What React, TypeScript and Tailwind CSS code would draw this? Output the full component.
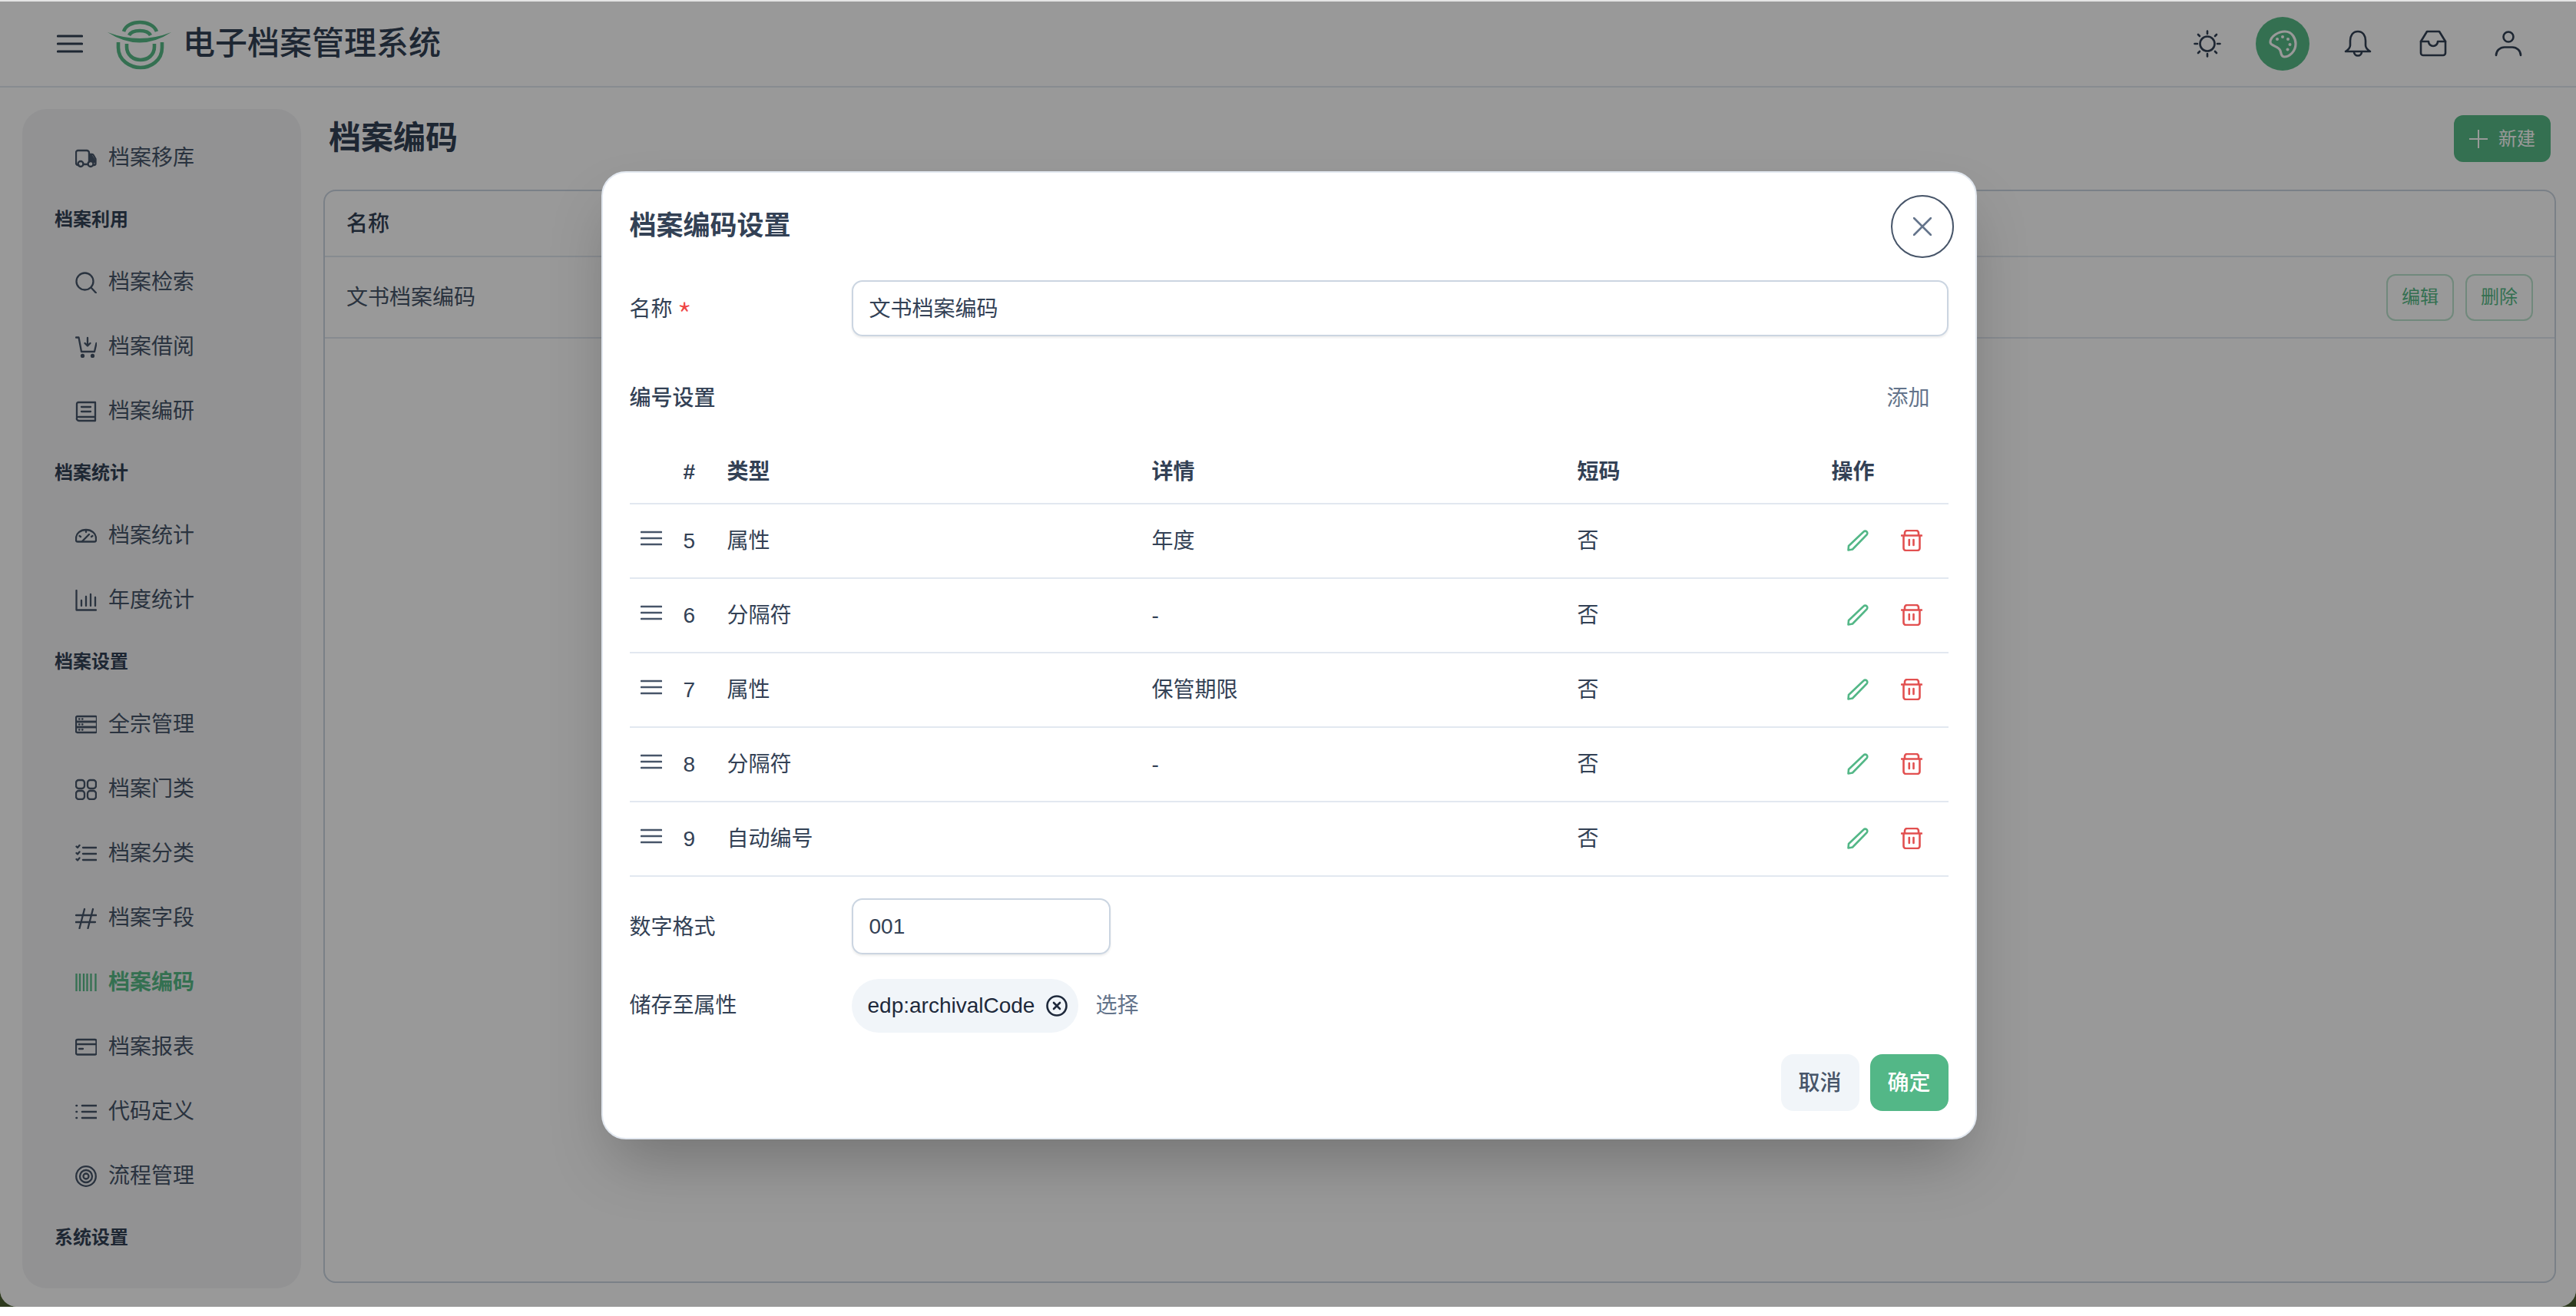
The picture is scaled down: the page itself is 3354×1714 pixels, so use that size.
import React from "react";

const Ic = ({ children, className = "w-[28px] h-[28px]", vb = "0 0 28 28", sw = 2.3 }: { children: React.ReactNode; className?: string; vb?: string; sw?: number }) => (
  <svg viewBox={vb} className={className + " shrink-0"} fill="none" stroke="currentColor" strokeWidth={sw} strokeLinecap="round" strokeLinejoin="round">
    {children}
  </svg>
);

const icons: Record<string, React.ReactNode> = {
  truck: (
    <>
      <path d="M4.5 23 H3.5 a2.5 2.5 0 0 1 -2.5 -2.5 V6.5 A2.5 2.5 0 0 1 3.5 4 H15 a3 3 0 0 1 3 3 V19" />
      <circle cx="7" cy="21.5" r="3.5" />
      <circle cx="20" cy="21.5" r="3.5" />
      <path d="M18 9 h4 a2 2 0 0 1 1.7 1 l2.8 5 v6 a2 2 0 0 1 -2 2 h-1" />
      <path d="M19 10 h3 l4 6 v4 h-2.5 a4 4 0 0 0 -4.5 -2 z" fill="currentColor" stroke="none" />
      <path d="M10.5 22 H16.5" />
    </>
  ),
  search: (
    <>
      <circle cx="12.5" cy="12.5" r="11" />
      <path d="M20.5 20.5 L27 27.5" />
    </>
  ),
  cart: (
    <>
      <path d="M1 1.5 H4.5 L8 20 H25 L27.5 9" />
      <path d="M16 2 V12 M12.5 9 L16 12.5 L19.5 9" />
      <circle cx="9.5" cy="25.5" r="1.5" fill="currentColor" />
      <circle cx="22.5" cy="25.5" r="1.5" fill="currentColor" />
    </>
  ),
  book: (
    <>
      <path d="M2 22 V4 a2 2 0 0 1 2 -2 H26 V26 H5 a3 3 0 0 1 -3 -4 a3 3 0 0 1 3 -1 H26" />
      <path d="M8 8 H20 M8 14 H20" />
    </>
  ),
  gauge: (
    <>
      <path d="M3 21.5 H25 a2 2 0 0 0 2 -2 V17 A13 11 0 0 0 1 17 v2.5 a2 2 0 0 0 2 2 z" />
      <path d="M9 21 L18 12 M5.5 14 L7 15 M14 7 V9 M22.5 14 L21 15" />
    </>
  ),
  bars: (
    <>
      <path d="M1.5 1 V26.5 H27" />
      <path d="M8 14 V21 M14 9 V21 M20 6 V21 M26 10 V21" />
    </>
  ),
  server: (
    <>
      <rect x="1" y="3" width="27" height="7" rx="1.5" />
      <rect x="1" y="10" width="27" height="7" rx="0" />
      <rect x="1" y="17" width="27" height="7" rx="1.5" />
      <path d="M5 6.5 H5.5 M9 6.5 H9.5 M5 13.5 H5.5 M9 13.5 H9.5 M5 20.5 H5.5 M9 20.5 H9.5" />
    </>
  ),
  grid: (
    <>
      <rect x="1" y="2" width="11" height="11" rx="3.5" />
      <rect x="16" y="2" width="11" height="11" rx="3.5" />
      <rect x="1" y="16" width="11" height="11" rx="3.5" />
      <rect x="16" y="16" width="11" height="11" rx="3.5" />
    </>
  ),
  checks: (
    <>
      <path d="M10 6 H27.5 M10 14 H27.5 M10 22 H27.5" />
      <path d="M1.5 4.5 L3 6 L5.5 3 M1.5 13 L3 14.5 L5.5 11.5 M1.5 21 L3 22.5 L5.5 19.5" />
    </>
  ),
  hash: <path d="M1 10 H27.5 M0.5 19 H26 M12 2 L5.5 27 M23 2 L16.5 27" />,
  barcode: <path d="M1.5 2 V25 M6 2 V25 M11 2 V25 M15.5 2 V25 M20.5 2 V25 M26.5 2 V25" strokeLinecap="butt" />,
  card: (
    <>
      <rect x="1" y="4" width="26.5" height="19.5" rx="2" />
      <path d="M1 10 H27.5 M5 16 H10" />
    </>
  ),
  list: <path d="M9 6 H27.5 M9 14 H27.5 M9 22 H27.5 M1.5 6 H2 M1.5 14 H2 M1.5 22 H2" strokeWidth="2.6" />,
  target: (
    <>
      <circle cx="14" cy="14" r="12.8" />
      <circle cx="14" cy="14" r="8" />
      <circle cx="14" cy="14" r="3.5" />
    </>
  ),
};

type Nav = { t: string; icon?: string; active?: boolean };
const nav: Nav[] = [
  { t: "档案移库", icon: "truck" },
  { t: "档案利用" },
  { t: "档案检索", icon: "search" },
  { t: "档案借阅", icon: "cart" },
  { t: "档案编研", icon: "book" },
  { t: "档案统计" },
  { t: "档案统计", icon: "gauge" },
  { t: "年度统计", icon: "bars" },
  { t: "档案设置" },
  { t: "全宗管理", icon: "server" },
  { t: "档案门类", icon: "grid" },
  { t: "档案分类", icon: "checks" },
  { t: "档案字段", icon: "hash" },
  { t: "档案编码", icon: "barcode", active: true },
  { t: "档案报表", icon: "card" },
  { t: "代码定义", icon: "list" },
  { t: "流程管理", icon: "target" },
  { t: "系统设置" },
];

const rows = [
  { n: "5", type: "属性", detail: "年度" },
  { n: "6", type: "分隔符", detail: "-" },
  { n: "7", type: "属性", detail: "保管期限" },
  { n: "8", type: "分隔符", detail: "-" },
  { n: "9", type: "自动编号", detail: "" },
];

const Logo = () => (
  <svg viewBox="0 0 100 80" className="w-[100px] h-[80px] shrink-0 -mx-[10px]" fill="none" stroke="#58bb88" strokeWidth="4.6">
    <path d="M31 24 C36 8 68 8 74 24" />
    <path d="M38 29 C42 21 62 21 66 29" />
    <path d="M10 25 Q52 41 93 25 Q52 52 10 25 Z" fill="#58bb88" stroke="none" />
    <path d="M24 38 V45 C24 62 40 71 53 71 C66 71 81 62 81 45 V38" />
    <path d="M35 40 V44 C35 55 44 61 53 61 C62 61 71 55 71 44 V40" />
  </svg>
);

export default function App() {
  return (
    <div className="w-[3354px] h-[1714px] bg-white overflow-hidden font-['Liberation_Sans','Noto_Sans_CJK_SC',sans-serif] text-[28px]">
      <div className="h-[2px] bg-[#e4e4e4]" />
      <div className="h-[1700px] bg-[#2e3a1e]">
        <div className="relative h-[1700px] rounded-b-[22px] overflow-hidden bg-white">
          {/* header */}
          <header className="h-[112px] border-b-2 border-[#e2e8f0] flex items-center pl-[74px] pr-[53px] pt-[2px]">
            <svg viewBox="0 0 34 24" className="w-[34px] h-[24px] text-[#334155] -mt-[2px]" fill="none" stroke="currentColor" strokeWidth="3.2" strokeLinecap="round">
              <path d="M1.5 2 H32.5 M1.5 12 H32.5 M1.5 22 H32.5" />
            </svg>
            <div className="ml-[32px] -mt-[2px]"><Logo /></div>
            <div className="ml-[18px] text-[42px] leading-none font-medium text-[#334155] -mt-[2px]">电子档案管理系统</div>
            <div className="ml-auto flex items-center gap-[28px] text-[#334155] -mt-[2px]">
              <div className="w-[70px] h-[70px] flex items-center justify-center">
                <Ic className="w-[36px] h-[36px]" vb="0 0 36 36" sw={2.6}>
                  <circle cx="18" cy="18" r="9.5" />
                  <path d="M18 1.5 V5 M18 31 V34.5 M1.5 18 H5 M31 18 H34.5 M6 6 L8 8 M30 6 L28 8 M6 30 L8 28 M30 30 L28 28" />
                </Ic>
              </div>
              <div className="w-[70px] h-[70px] rounded-full bg-[#58bb88] flex items-center justify-center">
                <svg viewBox="6 7 70 70" className="w-[70px] h-[70px]" fill="none" stroke="white" strokeWidth="3.2" strokeLinejoin="round">
                  <path d="M25 40 C25 32 36 26 44 26 C54 26 58 36 58 42 C58 52 50 59 43 59 C39 59 39 54 38 51 C36 45 25 45 25 40 Z" />
                  <g fill="white" stroke="none">
                    <circle cx="34" cy="36" r="2" />
                    <circle cx="41" cy="33" r="2" />
                    <circle cx="48" cy="36" r="2" />
                    <circle cx="50.5" cy="43" r="2" />
                    <circle cx="47.5" cy="49.5" r="2" />
                  </g>
                </svg>
              </div>
              <div className="w-[70px] h-[70px] flex items-center justify-center">
                <Ic className="w-[36px] h-[36px]" vb="0 0 36 36" sw={2.6}>
                  <path d="M18 2 C11 2 8 8 8 14 V20 C8 23 5 26 2 28 H34 C31 26 28 23 28 20 V14 C28 8 25 2 18 2 Z" />
                  <path d="M13 28.5 a5 5 0 0 0 10 0" />
                </Ic>
              </div>
              <div className="w-[70px] h-[70px] flex items-center justify-center">
                <Ic className="w-[36px] h-[36px]" vb="0 0 36 36" sw={2.6}>
                  <path d="M10 2 H26 L34 15 V30 a3 3 0 0 1 -3 3 H5 a3 3 0 0 1 -3 -3 V15 Z" />
                  <path d="M2 15 H12 a6 6 0 0 0 12 0 H34" />
                </Ic>
              </div>
              <div className="w-[70px] h-[70px] flex items-center justify-center">
                <Ic className="w-[36px] h-[36px]" vb="0 0 36 36" sw={2.6}>
                  <circle cx="18" cy="9" r="6.5" />
                  <path d="M2 33 C2 27 7 22.5 13 22.5 H23 C29 22.5 34 27 34 33" />
                </Ic>
              </div>
            </div>
          </header>

          {/* body */}
          <div className="flex">
            <aside className="ml-[29px] mt-[28px] w-[363px] h-[1536px] rounded-[32px] bg-[#f3f4f6] pt-[21px] shrink-0 overflow-hidden">
              {nav.map((n, i) =>
                n.icon ? (
                  <div key={i} className={"h-[84px] pl-[69px] pt-[2px] flex items-center gap-[15px] " + (n.active ? "text-[#58bb88] font-semibold" : "text-[#475569]")}>
                    <Ic className="w-[28px] h-[28px]">{icons[n.icon]}</Ic>
                    <span>{n.t}</span>
                  </div>
                ) : (
                  <div key={i} className="h-[78px] pl-[42px] flex items-center text-[24px] font-semibold text-[#334155]">
                    {n.t}
                  </div>
                )
              )}
            </aside>

            <main className="flex-1 ml-[29px] mr-[26px] min-w-0">
              <div className="mt-[36px] h-[61px] flex items-center justify-between pl-[7px] pr-[7px]">
                <h1 className="text-[42px] font-semibold leading-none text-[#334155] -mt-[2px]">档案编码</h1>
                <button className="w-[126px] h-[61px] rounded-[12px] bg-[#58bb88] text-white text-[24px] flex items-center justify-center gap-[14px]">
                  <svg viewBox="0 0 24 24" className="w-[24px] h-[24px]" fill="none" stroke="currentColor" strokeWidth="2">
                    <path d="M12 0 V24 M0 12 H24" />
                  </svg>
                  新建
                </button>
              </div>
              <div className="mt-[36px] h-[1424px] border-2 border-[#cbd5e1] rounded-[16px]">
                <div className="h-[86px] border-b-2 border-[#e2e8f0] pl-[28px] pt-[2px] flex items-center font-medium text-[#334155]">名称</div>
                <div className="h-[106px] border-b-2 border-[#e2e8f0] pl-[28px] pr-[28px] flex items-center justify-between text-[#475569]">
                  <span className="pt-[2px]">文书档案编码</span>
                  <div className="flex gap-[15px]">
                    <button className="w-[88px] h-[61px] rounded-[12px] border-2 border-[#58bb88]/40 text-[#58bb88] text-[24px]">编辑</button>
                    <button className="w-[88px] h-[61px] rounded-[12px] border-2 border-[#58bb88]/40 text-[#58bb88] text-[24px]">删除</button>
                  </div>
                </div>
              </div>
            </main>
          </div>

          {/* overlay + modal */}
          <div className="absolute inset-0 bg-black/40 flex justify-center items-start pt-[221px]">
            <div className="relative ml-[2px] w-[1791px] bg-white border-2 border-[#e2e8f0] rounded-[32px] p-[35px] shadow-[0_40px_80px_-16px_rgba(0,0,0,0.25)] text-[#334155]">
              <div className="h-[68px] flex items-center text-[35px] font-semibold">档案编码设置</div>
              <button className="absolute top-[29px] right-[28px] w-[82px] h-[82px] rounded-full border-2 border-[#475569] flex items-center justify-center text-[#64748b]">
                <svg viewBox="0 0 24 24" className="w-[24px] h-[24px]" fill="none" stroke="currentColor" strokeWidth="2.6" strokeLinecap="round">
                  <path d="M1 1 L23 23 M23 1 L1 23" />
                </svg>
              </button>

              <div className="mt-[37px] flex items-center">
                <div className="w-[289px] shrink-0 pt-[2px] flex items-center">
                  名称
                  <span className="ml-[6px] h-[28px] font-['Noto_Sans_CJK_JP',sans-serif] font-light text-[44px] leading-[44px] text-[#ef4444] translate-y-[-2px]">*</span>
                </div>
                <div className="flex-1 h-[73px] rounded-[14px] border-2 border-[#cbd5e1] shadow-[0_2px_3px_rgba(0,0,0,0.08)] flex items-center pl-[21px] pt-[2px]">文书档案编码</div>
              </div>

              <div className="mt-[53px] h-[56px] flex items-center justify-between">
                <span className="font-medium">编号设置</span>
                <span className="text-[#64748b] mr-[24px]">添加</span>
              </div>

              <div className="mt-[26px]">
                <div className="h-[84px] border-b-2 border-[#e2e8f0] pt-[2px] grid grid-cols-[70px_57px_553px_554px_331px_1fr] items-center font-semibold">
                  <span />
                  <span>#</span>
                  <span>类型</span>
                  <span>详情</span>
                  <span>短码</span>
                  <span>操作</span>
                </div>
                {rows.map((r) => (
                  <div key={r.n} className="h-[97px] border-b-2 border-[#e2e8f0] grid grid-cols-[70px_57px_553px_554px_331px_1fr] items-center">
                    <svg viewBox="0 0 28 20" className="ml-[14px] w-[28px] h-[20px] -mt-[8px]" fill="none" stroke="#475569" strokeWidth="2.6" strokeLinecap="round">
                      <path d="M1 2 H27 M1 10 H27 M1 18 H27" />
                    </svg>
                    <span>{r.n}</span>
                    <span>{r.type}</span>
                    <span>{r.detail}</span>
                    <span>否</span>
                    <div className="flex items-center gap-[42px] pl-[20px] -mt-[2px]">
                      <svg viewBox="0 0 28 28" className="w-[28px] h-[28px] text-[#53b787]" fill="none" stroke="currentColor" strokeWidth="2.6" strokeLinejoin="round">
                        <path d="M1.5 26.5 L2 21 L21.5 2.5 a2.8 2.8 0 0 1 4 4 L7 25.5 Z" />
                      </svg>
                      <svg viewBox="0 0 28 28" className="w-[28px] h-[28px] text-[#e25050]" fill="none" stroke="currentColor" strokeWidth="2.6" strokeLinecap="round" strokeLinejoin="round">
                        <path d="M5 7 V4 a3 3 0 0 1 3 -3 H20 a3 3 0 0 1 3 3 V7" />
                        <path d="M1 7.5 H27" />
                        <path d="M3.5 8 V24 a3 3 0 0 0 3 3 H21.5 a3 3 0 0 0 3 -3 V8" />
                        <path d="M10.8 13 V20 M16.5 13 V20" />
                      </svg>
                    </div>
                  </div>
                ))}
              </div>

              <div className="mt-[28px] flex items-center">
                <div className="w-[289px] shrink-0 pt-[2px]">数字格式</div>
                <div className="w-[337px] h-[73px] rounded-[14px] border-2 border-[#cbd5e1] shadow-[0_2px_3px_rgba(0,0,0,0.08)] flex items-center pl-[21px]">001</div>
              </div>

              <div className="mt-[32px] flex items-center">
                <div className="w-[289px] shrink-0">储存至属性</div>
                <div className="w-[295px] h-[70px] rounded-full bg-[#f1f5f9] flex items-center pl-[21px] text-[#1e293b]">
                  <span>edp:archivalCode</span>
                  <svg viewBox="0 0 28 28" className="ml-[15px] w-[28px] h-[28px]" fill="none" stroke="currentColor" strokeWidth="2.6" strokeLinecap="round">
                    <circle cx="14" cy="14" r="12.5" />
                    <path d="M10 10 L18 18 M18 10 L10 18" />
                  </svg>
                </div>
                <span className="ml-[23px] text-[#64748b]">选择</span>
              </div>

              <div className="mt-[28px] flex justify-end gap-[14px]">
                <button className="w-[102px] h-[74px] rounded-[16px] bg-[#f1f5f9] text-[#475569] font-medium pt-[2px]">取消</button>
                <button className="w-[102px] h-[74px] rounded-[16px] bg-[#53b787] text-white font-medium pt-[2px]">确定</button>
              </div>
            </div>
          </div>
        </div>
      </div>
    </div>
  );
}
